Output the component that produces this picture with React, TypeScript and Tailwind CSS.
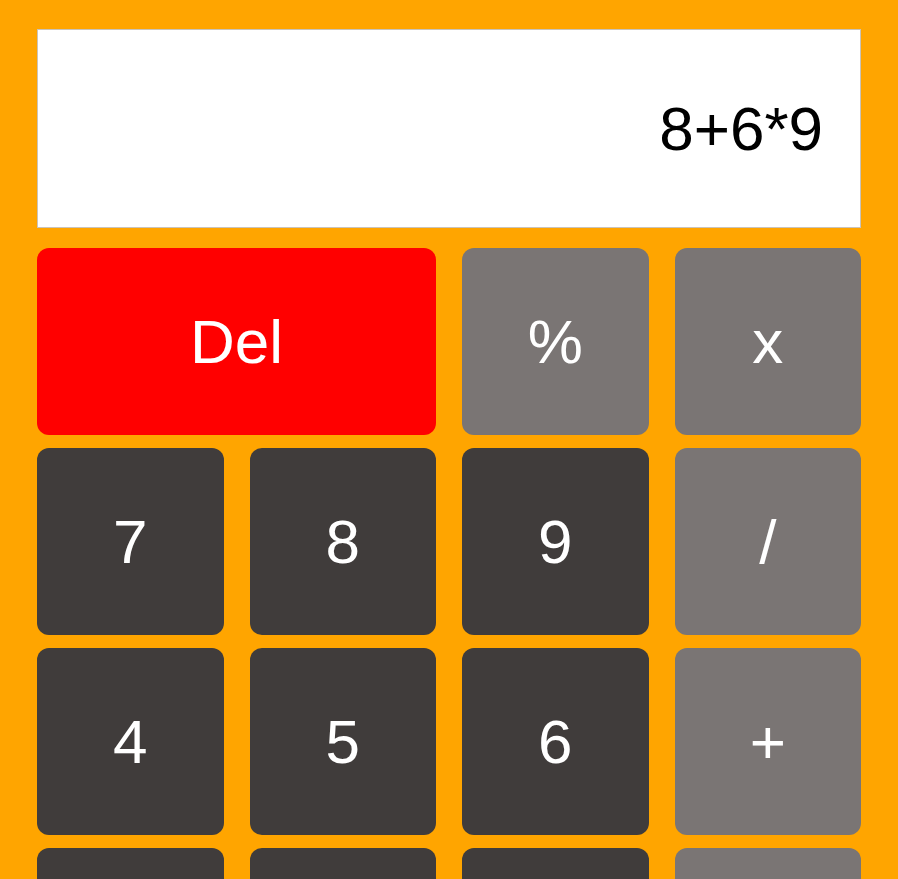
import React from 'react';

type Key = {
  label: string;
  kind: 'num' | 'op' | 'del';
  wide?: boolean;
};

const keys: Key[] = [
  { label: 'Del', kind: 'del', wide: true },
  { label: '%', kind: 'op' },
  { label: 'x', kind: 'op' },
  { label: '7', kind: 'num' },
  { label: '8', kind: 'num' },
  { label: '9', kind: 'num' },
  { label: '/', kind: 'op' },
  { label: '4', kind: 'num' },
  { label: '5', kind: 'num' },
  { label: '6', kind: 'num' },
  { label: '+', kind: 'op' },
  { label: '1', kind: 'num' },
  { label: '2', kind: 'num' },
  { label: '3', kind: 'num' },
  { label: '-', kind: 'op' },
  { label: '0', kind: 'num', wide: true },
  { label: '.', kind: 'num' },
  { label: '=', kind: 'op' },
];

const kindClass = {
  num: 'bg-[#403c3b]',
  op: 'bg-[#7a7574]',
  del: 'bg-[#ff0000]',
};

const App: React.FC = () => {
  return (
    <div className="min-h-screen w-full bg-[#ffa500] pt-[29px] pb-10 font-['Liberation_Sans',Arial,sans-serif]">
      <div className="mx-auto w-[824px] flex flex-col gap-5">
        <div className="h-[199px] bg-white border border-[#c9c3bb] flex items-center justify-end pr-[37px]">
          <span className="text-[62px] text-black leading-none">8+6*9</span>
        </div>
        <div className="grid grid-cols-4 gap-x-[26px] gap-y-[13px]">
          {keys.map((k) => (
            <button
              key={k.label}
              className={`${kindClass[k.kind]} ${
                k.wide ? 'col-span-2' : ''
              } h-[187px] rounded-xl text-white text-[62px] leading-none flex items-center justify-center`}
            >
              {k.label}
            </button>
          ))}
        </div>
      </div>
    </div>
  );
};

export default App;
